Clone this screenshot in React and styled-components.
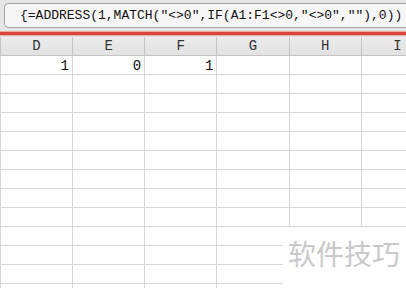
import React from 'react';
import styled, { createGlobalStyle } from 'styled-components';

const GlobalStyle = createGlobalStyle`
  html, body {
    margin: 0;
    padding: 0;
    background: #ffffff;
    overflow: hidden;
  }
`;

const Page = styled.div`
  position: relative;
  width: 406px;
  height: 288px;
  overflow: hidden;
  background: #ffffff;
`;

const TopBar = styled.div`
  background: #e5e5e5;
  padding: 3px 0 3px 4px;
`;

const FormulaBox = styled.div`
  height: 23px;
  border: 1px solid #a3a3a3;
  border-right: none;
  border-radius: 5px 0 0 5px;
  background: #f6f6f6;
  display: flex;
  align-items: center;
  padding-left: 15px;
  font-family: 'Liberation Mono', monospace;
  font-size: 13px;
  color: #111;
  white-space: nowrap;
  overflow: hidden;
`;

const RedLine = styled.div`
  height: 3px;
  background: #d6443c;
  border-top: 1px solid #eaaaa6;
  border-bottom: 1px solid #eaaaa6;
`;

const Gap = styled.div`
  height: 1px;
  background: #e3e3e3;
`;

const Row = styled.div`
  display: flex;
  height: 18px;
  border-bottom: 1px solid ${p => (p.$header ? '#c4c4c4' : '#d6d6d6')};
  background: ${p => (p.$header ? 'linear-gradient(#ececec, #e2e2e2)' : '#ffffff')};
`;

const Cell = styled.div`
  box-sizing: border-box;
  flex: 0 0 ${p => (p.$first ? 73 : 72.2)}px;
  border-right: 1px solid ${p => (p.$header ? '#c4c4c4' : '#d6d6d6')};
  border-left: ${p => (p.$first ? `1px solid ${p.$header ? '#c4c4c4' : '#d6d6d6'}` : 'none')};
  display: flex;
  align-items: center;
  justify-content: ${p => (p.$header ? 'center' : 'flex-end')};
  padding-right: ${p => (p.$header ? 0 : 3)}px;
  font-family: 'Liberation Mono', monospace;
  font-size: ${p => (p.$header ? 14 : 14)}px;
  color: ${p => (p.$header ? '#333' : '#111')};
  ${p => (p.$header ? '' : 'padding-top: 1px;')}
`;

const Watermark = styled.div`
  position: absolute;
  left: 283px;
  top: 227px;
  right: 0;
  bottom: 0;
  background: #ffffff;
  padding: 8px 0 0 5px;
  font-family: 'Noto Sans CJK SC', sans-serif;
  font-size: 28px;
  line-height: 36px;
  color: #c9c9c9;
`;

const columns = ['D', 'E', 'F', 'G', 'H', 'I'];
const firstRow = ['1', '0', '1', '', '', ''];

export default function App() {
  return (
    <Page>
      <GlobalStyle />
      <TopBar>
        <FormulaBox>{'{=ADDRESS(1,MATCH("<>0",IF(A1:F1<>0,"<>0",""),0))'}</FormulaBox>
      </TopBar>
      <RedLine />
      <Gap />
      <Row $header>
        {columns.map((c, i) => (
          <Cell key={c} $header $first={i === 0}>{c}</Cell>
        ))}
      </Row>
      <Row>
        {firstRow.map((v, i) => (
          <Cell key={i} $first={i === 0}>{v}</Cell>
        ))}
      </Row>
      {Array.from({ length: 12 }).map((_, r) => (
        <Row key={r}>
          {columns.map((c, i) => (
            <Cell key={c} $first={i === 0} />
          ))}
        </Row>
      ))}
      <Watermark>软件技巧</Watermark>
    </Page>
  );
}
